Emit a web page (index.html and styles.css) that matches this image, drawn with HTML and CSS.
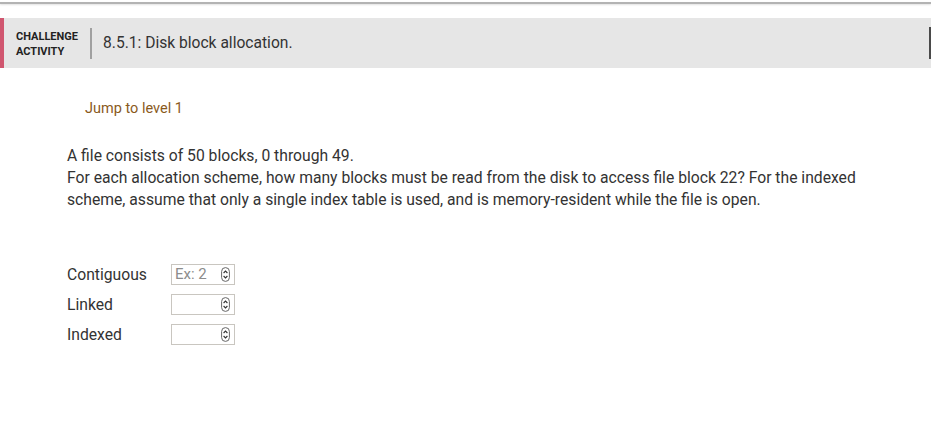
FILE: index.html
```html
<!DOCTYPE html>
<html lang="en">
<head>
    <meta charset="UTF-8">
    <title>8.5.1: Disk block allocation.</title>
    <link rel="stylesheet" href="styles.css">
</head>
<body>
    <div class="top-rule"></div>

    <div class="banner">
        <div class="activity-label">CHALLENGE<br>ACTIVITY</div>
        <div class="divider"></div>
        <div class="activity-title">8.5.1: Disk block allocation.</div>
        <div class="edge-button"></div>
    </div>

    <div class="content">
        <div class="jump">Jump to level 1</div>

        <p class="prompt">
            A file consists of 50 blocks, 0 through 49.<br>
            For each allocation scheme, how many blocks must be read from the disk to access file block 22? For the indexed scheme, assume that only a single index table is used, and is memory-resident while the file is open.
        </p>

        <div class="answers">
            <div class="answer-row">
                <span class="answer-label">Contiguous</span>
                <div class="num-box">
                    <span class="placeholder">Ex: 2</span>
                    <svg class="spin" width="9" height="15" viewBox="0 0 9 15"><rect x="0.6" y="0.6" width="7.8" height="13.8" rx="3.9" fill="#fff" stroke="#666" stroke-width="1"/><path d="M2.6 6 L4.5 4 L6.4 6 M2.6 9 L4.5 11 L6.4 9" fill="none" stroke="#333" stroke-width="1.1"/></svg>
                </div>
            </div>
            <div class="answer-row">
                <span class="answer-label">Linked</span>
                <div class="num-box">
                    <span class="placeholder"></span>
                    <svg class="spin" width="9" height="15" viewBox="0 0 9 15"><rect x="0.6" y="0.6" width="7.8" height="13.8" rx="3.9" fill="#fff" stroke="#666" stroke-width="1"/><path d="M2.6 6 L4.5 4 L6.4 6 M2.6 9 L4.5 11 L6.4 9" fill="none" stroke="#333" stroke-width="1.1"/></svg>
                </div>
            </div>
            <div class="answer-row">
                <span class="answer-label">Indexed</span>
                <div class="num-box">
                    <span class="placeholder"></span>
                    <svg class="spin" width="9" height="15" viewBox="0 0 9 15"><rect x="0.6" y="0.6" width="7.8" height="13.8" rx="3.9" fill="#fff" stroke="#666" stroke-width="1"/><path d="M2.6 6 L4.5 4 L6.4 6 M2.6 9 L4.5 11 L6.4 9" fill="none" stroke="#333" stroke-width="1.1"/></svg>
                </div>
            </div>
        </div>
    </div>
</body>
</html>
```

FILE: styles.css
```css
body {
    margin: 0;
    font-family: Roboto, "Liberation Sans", sans-serif;
    color: #333;
    background: #fff;
}
.top-rule {
    margin-top: 2px;
    height: 2px;
    background: #b3b3b3;
    box-shadow: 0 1px 2px rgba(0, 0, 0, 0.12);
}
.banner {
    display: flex;
    align-items: center;
    margin-top: 14px;
    height: 50px;
    background: #e6e6e6;
    border-left: 4px solid #d0566f;
}
.activity-label {
    margin-left: 12px;
    font-size: 11px;
    font-weight: 700;
    line-height: 15px;
    color: #222;
    padding-top: 1px;
}
.divider {
    margin-left: 12px;
    width: 2px;
    height: 31px;
    background: #a0a0a0;
}
.activity-title {
    margin-left: 11px;
    font-size: 15.6px;
    color: #333;
}
.edge-button {
    margin-left: auto;
    width: 0;
    height: 30px;
    border-left: 2px solid #4a4a4a;
    border-top: 1px solid #4a4a4a;
    border-bottom: 1px solid #4a4a4a;
}
.content {
    padding-left: 67px;
}
.jump {
    margin: 32px 0 0 18px;
    font-size: 14.5px;
    line-height: 18px;
    color: #8a5a1c;
}
.prompt {
    width: 810px;
    margin: 27px 0 0;
    font-size: 15.7px;
    line-height: 22px;
    color: #333;
}
.answers {
    margin-top: 48px;
}
.answer-row {
    display: flex;
    align-items: center;
    height: 30px;
}
.answer-label {
    width: 104px;
    font-size: 15.7px;
    color: #333;
}
.num-box {
    display: flex;
    align-items: center;
    justify-content: space-between;
    box-sizing: border-box;
    width: 64px;
    height: 21px;
    padding: 0 4px 0 3px;
    border: 1px solid #c9c6c0;
    background: #fff;
}
.placeholder {
    font-size: 15px;
    color: #8c8c8c;
}
```
